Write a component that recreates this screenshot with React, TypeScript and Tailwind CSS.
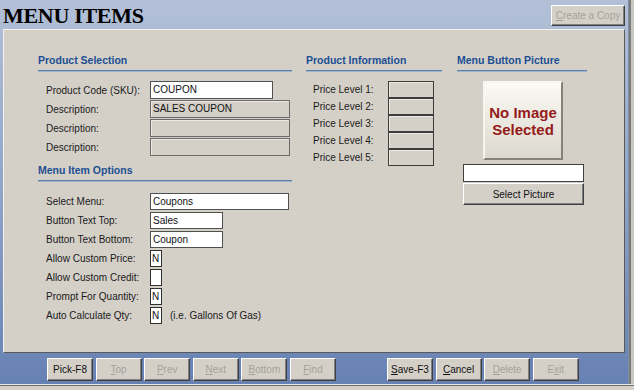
import React from "react";

const raised =
  "border border-t-white border-l-white border-r-[#404040] border-b-[#404040] shadow-[inset_-1px_-1px_0_#808080]";

function Header({ title, w }: { title: string; w: string }) {
  return (
    <div className={w}>
      <div className="h-[14px] leading-[14px] text-[10.5px] font-bold text-[#1c4e93] whitespace-nowrap">{title}</div>
      <div className="mt-[3px] h-[2px] bg-[#5b7fa9] border-b border-b-[#9fb3c9]" />
    </div>
  );
}

function Row({ label, h, children }: { label: string; h: string; children: React.ReactNode }) {
  return (
    <div className={`flex items-center ${h}`}>
      <div className="w-[112px] pl-[8px] whitespace-nowrap text-[10px] text-[#1a1a1a]">{label}</div>
      {children}
    </div>
  );
}

function FooterBtn({ label, u, enabled }: { label: string; u?: number; enabled?: boolean }) {
  const chars = label.split("");
  return (
    <div
      className={`w-[46px] h-[23px] flex items-center justify-center bg-[#d4d0c8] text-[10px] ${raised} ${
        enabled ? "text-[#111]" : "text-[#a5a29b]"
      }`}
    >
      <span className="whitespace-nowrap">
        {chars.map((c, i) => (
          <span key={i} className={u === i ? "underline" : ""}>
            {c}
          </span>
        ))}
      </span>
    </div>
  );
}

export default function App() {
  return (
    <div className="w-[634px] h-[390px] overflow-hidden flex flex-col font-['Liberation_Sans',Arial,sans-serif] bg-[#d4d0c8]">
      <div className="flex h-[384px]">
        <div className="w-[628px] h-[384px] flex flex-col bg-linear-to-b from-[#b3c0d7] via-[#8fa4c7] to-[#6681b3]">
          {/* title bar */}
          <div className="h-[29px] flex items-start justify-between pl-[3px] pr-[3px]">
            <div className="mt-[5px] h-[22px] leading-[22px] text-[22px] font-bold text-black font-['Liberation_Serif','Times_New_Roman',serif] tracking-[-0.3px]">
              MENU ITEMS
            </div>
            <div
              className={`mt-[5px] w-[74px] h-[21px] flex items-center justify-center bg-[#d4d0c8] text-[10px] text-[#a5a29b] ${raised}`}
            >
              <span>
                <span className="underline">C</span>reate a Copy
              </span>
            </div>
          </div>

          {/* main panel */}
          <div className="ml-[3px] w-[622px] h-[324px] bg-[#d4d0c8] border border-t-[#f4f2ee] border-l-[#f4f2ee] border-r-[#5a5a5a] border-b-[#5a5a5a] pl-[34px] pt-[23px] flex">
            {/* column 1 */}
            <div className="w-[254px] flex flex-col">
              <Header title="Product Selection" w="w-[254px]" />
              <div className="mt-[9px] flex flex-col gap-[1px]">
                <Row label="Product Code (SKU):" h="h-[18px]">
                  <div className="w-[123px] h-[18px] bg-white border border-[#505050] text-[10px] leading-[16px] pl-[2px] text-[#111]">COUPON</div>
                </Row>
                <Row label="Description:" h="h-[18px]">
                  <div className="w-[140px] h-[18px] bg-[#d4d0c8] border border-[#6a6a6a] shadow-[inset_1px_1px_0_#ece9e2] text-[10px] leading-[16px] pl-[2px] text-[#111]">SALES COUPON</div>
                </Row>
                <Row label="Description:" h="h-[18px]">
                  <div className="w-[140px] h-[18px] bg-[#d4d0c8] border border-[#6a6a6a] shadow-[inset_1px_1px_0_#ece9e2]" />
                </Row>
                <Row label="Description:" h="h-[18px]">
                  <div className="w-[140px] h-[18px] bg-[#d4d0c8] border border-[#6a6a6a] shadow-[inset_1px_1px_0_#ece9e2]" />
                </Row>
              </div>
              <div className="mt-[7px]">
                <Header title="Menu Item Options" w="w-[254px]" />
              </div>
              <div className="mt-[11px] flex flex-col gap-[2px]">
                <Row label="Select Menu:" h="h-[17px]">
                  <div className="w-[139px] h-[17px] bg-white border border-[#505050] text-[10px] leading-[15px] pl-[2px] text-[#111]">Coupons</div>
                </Row>
                <Row label="Button Text Top:" h="h-[17px]">
                  <div className="w-[73px] h-[17px] bg-white border border-[#505050] text-[10px] leading-[15px] pl-[2px] text-[#111]">Sales</div>
                </Row>
                <Row label="Button Text Bottom:" h="h-[17px]">
                  <div className="w-[73px] h-[17px] bg-white border border-[#505050] text-[10px] leading-[15px] pl-[2px] text-[#111]">Coupon</div>
                </Row>
                <Row label="Allow Custom Price:" h="h-[17px]">
                  <div className="w-[12px] h-[17px] bg-white border border-[#303030] text-[10px] leading-[15px] pl-[1px] text-[#111]">N</div>
                </Row>
                <Row label="Allow Custom Credit:" h="h-[17px]">
                  <div className="w-[12px] h-[17px] bg-white border border-[#303030]" />
                </Row>
                <Row label="Prompt For Quantity:" h="h-[17px]">
                  <div className="w-[12px] h-[17px] bg-white border border-[#303030] text-[10px] leading-[15px] pl-[1px] text-[#111]">N</div>
                </Row>
                <Row label="Auto Calculate Qty:" h="h-[17px]">
                  <div className="w-[12px] h-[17px] bg-white border border-[#303030] text-[10px] leading-[15px] pl-[1px] text-[#111]">N</div>
                  <div className="ml-[8px] text-[10px] text-[#1a1a1a] whitespace-nowrap">(i.e. Gallons Of Gas)</div>
                </Row>
              </div>
            </div>

            {/* column 2 */}
            <div className="ml-[14px] w-[136px] flex flex-col">
              <Header title="Product Information" w="w-[136px]" />
              <div className="mt-[9px] flex flex-col">
                {[1, 2, 3, 4, 5].map((n) => (
                  <div key={n} className="flex items-center h-[17px]">
                    <div className="w-[82px] pl-[7px] text-[10px] text-[#1a1a1a] whitespace-nowrap">Price Level {n}:</div>
                    <div className="w-[46px] h-[17px] border border-[#3c3c3c] bg-[#d4d0c8] shadow-[inset_1px_1px_0_#ece9e2]" />
                  </div>
                ))}
              </div>
            </div>

            {/* column 3 */}
            <div className="ml-[15px] w-[130px] flex flex-col">
              <Header title="Menu Button Picture" w="w-[130px]" />
              <div className="mt-[9px] ml-[26px] w-[80px] h-[79px] bg-linear-to-b from-[#fbfaf5] to-[#dcd8ce] border-2 border-t-[#f7f5f0] border-l-[#f7f5f0] border-r-[#85827b] border-b-[#85827b] flex flex-col items-center justify-center text-[15px] leading-[17px] font-bold text-[#951b1b]">
                <div>No Image</div>
                <div>Selected</div>
              </div>
              <div className="mt-[4px] ml-[6px] w-[121px] h-[18px] bg-white border border-[#404040]" />
              <div className={`mt-[1px] ml-[6px] w-[121px] h-[22px] bg-[#d4d0c8] flex items-center justify-center text-[10px] text-[#111] ${raised}`}>
                Select Picture
              </div>
            </div>
          </div>

          {/* footer */}
          <div className="pt-[5px] pl-[47px] flex">
            <div className="flex gap-[2.6px]">
              <FooterBtn label="Pick-F8" enabled />
              <FooterBtn label="Top" u={0} />
              <FooterBtn label="Prev" u={0} />
              <FooterBtn label="Next" u={0} />
              <FooterBtn label="Bottom" u={0} />
              <FooterBtn label="Find" u={0} />
            </div>
            <div className="ml-[51px] flex gap-[2.6px]">
              <FooterBtn label="Save-F3" u={0} enabled />
              <FooterBtn label="Cancel" u={0} enabled />
              <FooterBtn label="Delete" u={0} />
              <FooterBtn label="Exit" u={1} />
            </div>
          </div>
        </div>
        {/* right window frame */}
        <div className="w-[6px] h-[384px] flex">
          <div className="w-[1px] bg-[#7f8fa9]" />
          <div className="w-[2px] bg-[#7a7a7a]" />
          <div className="w-[3px] bg-[#c9c7c2]" />
        </div>
      </div>
      {/* bottom frame */}
      <div className="h-[6px] flex flex-col">
        <div className="h-[1px] bg-[#e6e6e6]" />
        <div className="h-[1px] bg-[#6e6e6e]" />
        <div className="flex-1 bg-[#d4d0c8]" />
      </div>
    </div>
  );
}
